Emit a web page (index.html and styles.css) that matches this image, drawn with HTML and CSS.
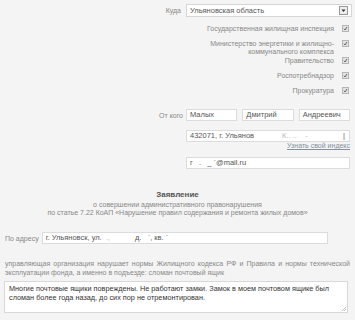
FILE: index.html
```html
<!DOCTYPE html>
<html lang="ru">
<head>
    <meta charset="UTF-8">
    <title>Заявление</title>
    <link rel="stylesheet" href="styles.css">
</head>
<body>
    <div class="form">
        <div class="row to-row">
            <span class="label">Куда</span>
            <div class="select">
                Ульяновская область
                <svg class="arrow" width="9" height="9" viewBox="0 0 9 9">
                    <rect x="0.5" y="0.5" width="8" height="8" fill="#eee" stroke="#999"/>
                    <path d="M2.5 3.5h4l-2 2.5z" fill="#333"/>
                </svg>
            </div>
        </div>

        <div class="checks">
            <div class="check-row"><span>Государственная жилищная инспекция</span><svg class="cb" width="7" height="7" viewBox="0 0 7 7"><rect x="0.5" y="0.5" width="6" height="6" fill="#e2e2e2" stroke="#b5b5b5"/><path d="M2 3.8l1 1.2 2-3" fill="none" stroke="#555" stroke-width="0.9"/></svg></div>
            <div class="check-row tall"><span>Министерство энергетики и жилищно-<br>коммунального комплекса</span><svg class="cb" width="7" height="7" viewBox="0 0 7 7"><rect x="0.5" y="0.5" width="6" height="6" fill="#e2e2e2" stroke="#b5b5b5"/><path d="M2 3.8l1 1.2 2-3" fill="none" stroke="#555" stroke-width="0.9"/></svg></div>
            <div class="check-row"><span>Правительство</span><svg class="cb" width="7" height="7" viewBox="0 0 7 7"><rect x="0.5" y="0.5" width="6" height="6" fill="#e2e2e2" stroke="#b5b5b5"/><path d="M2 3.8l1 1.2 2-3" fill="none" stroke="#555" stroke-width="0.9"/></svg></div>
            <div class="check-row"><span>Роспотребнадзор</span><svg class="cb" width="7" height="7" viewBox="0 0 7 7"><rect x="0.5" y="0.5" width="6" height="6" fill="#e2e2e2" stroke="#b5b5b5"/><path d="M2 3.8l1 1.2 2-3" fill="none" stroke="#555" stroke-width="0.9"/></svg></div>
            <div class="check-row"><span>Прокуратура</span><svg class="cb" width="7" height="7" viewBox="0 0 7 7"><rect x="0.5" y="0.5" width="6" height="6" fill="#e2e2e2" stroke="#b5b5b5"/><path d="M2 3.8l1 1.2 2-3" fill="none" stroke="#555" stroke-width="0.9"/></svg></div>
        </div>

        <div class="row from-row">
            <span class="label">От кого</span>
            <div class="names">
                <div class="input">Малых</div>
                <div class="input">Дмитрий</div>
                <div class="input">Андреевич</div>
            </div>
        </div>

        <div class="row addr">
            <div class="input wide">432071, г. Ульянов<span class="blur">К.. ..&nbsp;&nbsp;&nbsp; -</span><span class="end">|</span></div>
        </div>
        <div class="hint"><a href="#">Узнать свой индекс</a></div>
        <div class="row mail">
            <div class="input wide">г &nbsp; . &nbsp; _ `@mail.ru</div>
        </div>

        <div class="title">
            <h3>Заявление</h3>
            <p>о совершении административного правонарушения<br>по статье 7.22 КоАП «Нарушение правил содержания и ремонта жилых домов»</p>
        </div>

        <div class="place-row">
            <span class="label">По адресу</span>
            <div class="input place">г. Ульяновск, ул. <span class="blur">.,</span>&nbsp;&nbsp;&nbsp;&nbsp;&nbsp;&nbsp;&nbsp;&nbsp;&nbsp;&nbsp;&nbsp; д. &nbsp; `, кв. `</div>
        </div>

        <p class="desc">управляющая организация нарушает нормы Жилищного кодекса РФ и Правила и нормы технической эксплуатации фонда, а именно в подъезде: сломан почтовый ящик</p>

        <div class="textarea">
            Многие почтовые ящики повреждены. Не работают замки. Замок в моем почтовом ящике был<br>сломан более года назад, до сих пор не отремонтирован.
            <svg class="grip" width="5" height="5" viewBox="0 0 5 5"><path d="M1 5L5 1M3 5L5 3" stroke="#aaa" stroke-width="0.7"/></svg>
        </div>
    </div>
</body>
</html>
```

FILE: styles.css
```css
body {
    margin: 0;
    background-color: #f4f4f4;
    font-family: "Liberation Sans", Arial, sans-serif;
    font-size: 7px;
    color: #888;
}

.form {
    padding: 4px 5px 0 5px;
}

.row {
    display: flex;
    justify-content: flex-end;
    align-items: center;
}

.label {
    margin-right: 5px;
}

.select {
    position: relative;
    width: 166px;
    height: 13px;
    margin-right: -2px;
    box-sizing: border-box;
    border: 1px solid #d6d6d6;
    background: #fff;
    padding-left: 3px;
    line-height: 11px;
    font-size: 7.5px;
    color: #555;
}

.arrow {
    position: absolute;
    right: 3px;
    top: 1px;
}

.checks {
    margin-top: 8px;
}

.check-row {
    display: flex;
    justify-content: flex-end;
    align-items: flex-start;
    height: 15px;
    line-height: 8px;
    text-align: right;
}

.check-row.tall {
    height: 17px;
}

.cb {
    margin: 0 1px 0 8px;
    flex-shrink: 0;
}

.from-row {
    margin-top: 7px;
}

.from-row .label {
    margin-right: 3px;
}

.names {
    display: flex;
    gap: 5px;
    width: 164px;
}

.input {
    height: 12px;
    box-sizing: border-box;
    border: 1px solid #dcdcdc;
    background: #fff;
    padding-left: 3px;
    line-height: 10px;
    font-size: 7.5px;
    color: #555;
    white-space: nowrap;
}

.names .input {
    flex: 1;
}

.input.wide {
    width: 164px;
    position: relative;
}

.addr {
    margin-top: 9px;
}

.blur {
    color: #bbb;
    margin-left: 28px;
}

.end {
    position: absolute;
    right: 4px;
}

.hint {
    text-align: right;
    line-height: 8px;
}

.hint a {
    color: #8590a0;
}

.mail {
    margin-top: 7px;
}

.title {
    margin-top: 21px;
    text-align: center;
}

.title h3 {
    margin: 0;
    font-size: 8px;
    line-height: 10px;
    color: #555;
}

.title p {
    margin: 1px 0 0 0;
    line-height: 8px;
}

.place-row {
    display: flex;
    align-items: center;
    margin-top: 15px;
}

.place-row .label {
    margin-right: 3px;
}

.input.place {
    width: 286px;
}

.input.place .blur {
    margin-left: 2px;
}

.desc {
    margin: 15px 0 0 0;
    line-height: 9px;
    text-align: justify;
}

.textarea {
    position: relative;
    height: 32px;
    margin: 4px 2px 0 -1px;
    box-sizing: border-box;
    border: 1px solid #d8d8d8;
    background: #fff;
    padding: 2px 4px 0 4px;
    line-height: 9px;
    font-size: 7.3px;
    color: #333;
}

.grip {
    position: absolute;
    right: 1px;
    bottom: 1px;
}
```
